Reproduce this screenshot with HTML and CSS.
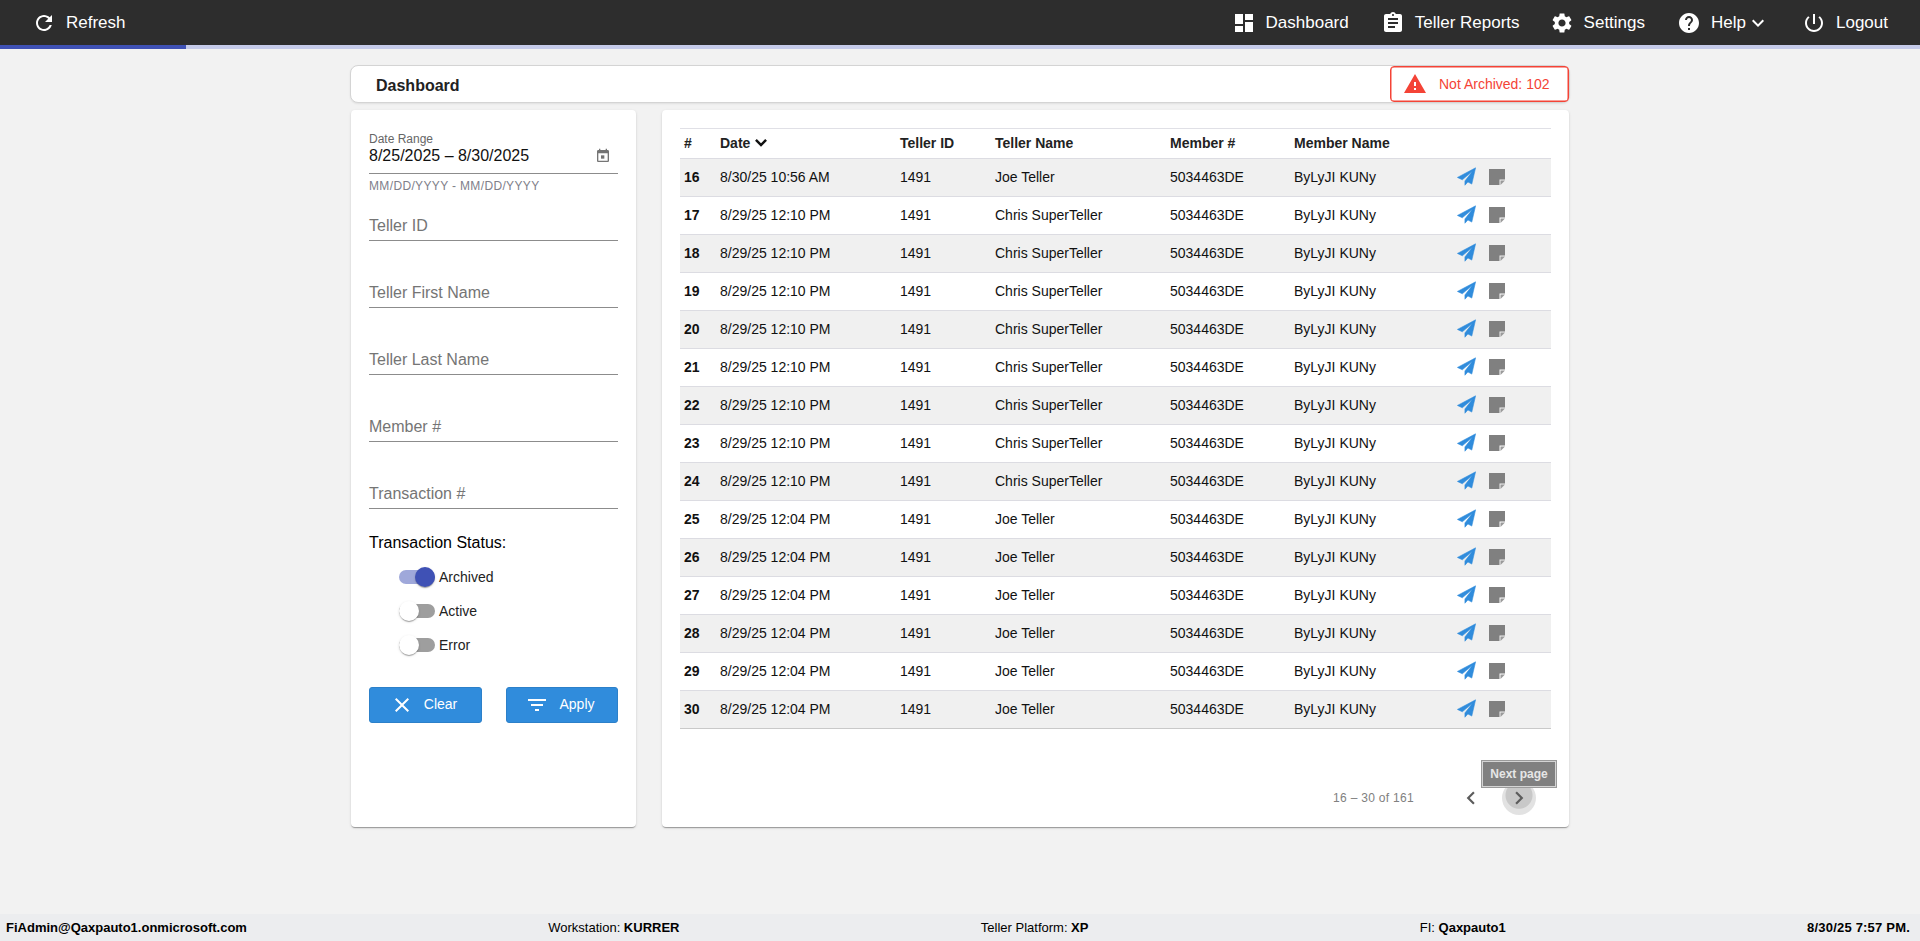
FILE: index.html
```html
<!DOCTYPE html>
<html lang="en">
<head>
<meta charset="utf-8">
<title>Dashboard</title>
<link rel="stylesheet" href="styles.css">
</head>
<body>
<svg class="sprite" aria-hidden="true">
  <symbol id="plane" viewBox="0 0 24 24"><path d="M23.5 1 .5 13.2l6.2 3L19.5 5.5 10 17.6V23l3.8-4.1 4.9 2.7z"/></symbol>
  <symbol id="note" viewBox="0 0 16 16"><path d="M0 0h16v10.5h-5.5V16H0z"/><path d="M11.5 11.5H16L11.5 16z" class="fold"/></symbol>
</svg>
<div class="page">
  <header class="topbar">
    <a class="nav-item"><svg class="icon" viewBox="0 0 24 24"><path d="M17.65 6.35C16.2 4.9 14.21 4 12 4c-4.42 0-7.99 3.58-7.99 8s3.57 8 7.99 8c3.73 0 6.84-2.55 7.73-6h-2.08c-.82 2.33-3.04 4-5.65 4-3.31 0-6-2.69-6-6s2.69-6 6-6c1.66 0 3.14.69 4.22 1.78L13 11h7V4l-2.35 2.35z"/></svg><span>Refresh</span></a>
    <nav class="nav-right">
      <a class="nav-item"><svg class="icon" viewBox="0 0 24 24"><path d="M3 13h8V3H3v10zm0 8h8v-6H3v6zm10 0h8V11h-8v10zm0-18v6h8V3h-8z"/></svg><span>Dashboard</span></a>
      <a class="nav-item nav-reports"><svg class="icon" viewBox="0 0 24 24"><path d="M19 3h-4.18C14.4 1.84 13.3 1 12 1c-1.3 0-2.4.84-2.82 2H5c-1.1 0-2 .9-2 2v14c0 1.1.9 2 2 2h14c1.1 0 2-.9 2-2V5c0-1.1-.9-2-2-2zm-7 0c.55 0 1 .45 1 1s-.45 1-1 1-1-.45-1-1 .45-1 1-1zm2 14H7v-2h7v2zm3-4H7v-2h10v2zm0-4H7V7h10v2z"/></svg><span>Teller Reports</span></a>
      <a class="nav-item"><svg class="icon" viewBox="0 0 24 24"><path d="M19.14 12.94c.04-.3.06-.61.06-.94 0-.32-.02-.64-.07-.94l2.03-1.58c.18-.14.23-.41.12-.61l-1.92-3.32c-.12-.22-.37-.29-.59-.22l-2.39.96c-.5-.38-1.03-.7-1.62-.94l-.36-2.54c-.04-.24-.24-.41-.48-.41h-3.84c-.24 0-.43.17-.47.41l-.36 2.54c-.59.24-1.13.57-1.62.94l-2.39-.96c-.22-.08-.47 0-.59.22L2.74 8.87c-.12.21-.08.47.12.61l2.03 1.58c-.05.3-.09.63-.09.94s.02.64.07.94l-2.03 1.58c-.18.14-.23.41-.12.61l1.92 3.32c.12.22.37.29.59.22l2.39-.96c.5.38 1.03.7 1.62.94l.36 2.54c.05.24.24.41.48.41h3.84c.24 0 .44-.17.47-.41l.36-2.54c.59-.24 1.13-.56 1.62-.94l2.39.96c.22.08.47 0 .59-.22l1.92-3.32c.12-.22.07-.47-.12-.61l-2.01-1.58zM12 15.6c-1.98 0-3.6-1.62-3.6-3.6s1.62-3.6 3.6-3.6 3.6 1.62 3.6 3.6-1.62 3.6-3.6 3.6z"/></svg><span>Settings</span></a>
      <a class="nav-item"><svg class="icon" viewBox="0 0 24 24"><path d="M12 2C6.48 2 2 6.48 2 12s4.48 10 10 10 10-4.48 10-10S17.52 2 12 2zm1 17h-2v-2h2v2zm2.07-7.75l-.9.92C13.45 12.9 13 13.5 13 15h-2v-.5c0-1.1.45-2.1 1.17-2.83l1.24-1.26c.37-.36.59-.86.59-1.41 0-1.1-.9-2-2-2s-2 .9-2 2H8c0-2.21 1.79-4 4-4s4 1.79 4 4c0 .88-.36 1.68-.93 2.25z"/></svg><span>Help</span><svg class="icon caret" viewBox="0 0 24 24"><path d="M16.59 8.59L12 13.17 7.41 8.59 6 10l6 6 6-6z"/></svg></a>
      <a class="nav-item"><svg class="icon" viewBox="0 0 24 24"><path d="M13 3h-2v10h2V3zm4.83 2.17l-1.42 1.42C17.99 7.86 19 9.81 19 12c0 3.87-3.13 7-7 7s-7-3.13-7-7c0-2.19 1.01-4.14 2.58-5.42L6.17 5.17C4.23 6.82 3 9.26 3 12c0 4.97 4.03 9 9 9s9-4.03 9-9c0-2.74-1.23-5.18-3.17-6.83z"/></svg><span>Logout</span></a>
    </nav>
  </header>
  <div class="progress"><div class="progress-fill"></div></div>

  <main class="main">
    <div class="title-card">
      <h1 class="title">Dashboard</h1>
      <div class="alert">
        <svg class="alert-icon" viewBox="0 0 24 24"><path d="M1 21h22L12 2 1 21zm12-3h-2v-2h2v2zm0-4h-2v-4h2v4z"/></svg>
        <span>Not Archived: 102</span>
      </div>
    </div>

    <div class="columns">
      <aside class="card filters">
        <div class="date-field">
          <label class="date-label">Date Range</label>
          <div class="date-value">
            <span>8/25/2025 – 8/30/2025</span>
            <svg class="cal" viewBox="0 0 24 24"><path d="M19 3h-1V1h-2v2H8V1H6v2H5c-1.1 0-2 .9-2 2v14c0 1.1.9 2 2 2h14c1.1 0 2-.9 2-2V5c0-1.1-.9-2-2-2zm0 16H5V8h14v11z"/><path d="M9 11h5v5H9z"/></svg>
          </div>
          <div class="date-hint">MM/DD/YYYY - MM/DD/YYYY</div>
        </div>
        <div class="field field-first">Teller ID</div>
        <div class="field">Teller First Name</div>
        <div class="field">Teller Last Name</div>
        <div class="field">Member #</div>
        <div class="field">Transaction #</div>

        <div class="status-title">Transaction Status:</div>
        <div class="toggles">
          <div class="toggle on"><span class="track"><span class="thumb"></span></span><span>Archived</span></div>
          <div class="toggle"><span class="track"><span class="thumb"></span></span><span>Active</span></div>
          <div class="toggle"><span class="track"><span class="thumb"></span></span><span>Error</span></div>
        </div>

        <div class="actions">
          <button class="btn"><svg class="btn-icon" viewBox="0 0 24 24"><path d="M19 6.41L17.59 5 12 10.59 6.41 5 5 6.41 10.59 12 5 17.59 6.41 19 12 13.41 17.59 19 19 17.59 13.41 12z"/></svg><span class="btn-label">Clear</span></button>
          <button class="btn"><svg class="btn-icon" viewBox="0 0 24 24"><path d="M10 18h4v-2h-4v2zM3 6v2h18V6H3zm3 7h12v-2H6v2z"/></svg><span class="btn-label">Apply</span></button>
        </div>
      </aside>

      <section class="card results">
        <table class="grid">
          <colgroup><col class="c1"><col class="c2"><col class="c3"><col class="c4"><col class="c5"><col class="c6"><col class="c7"></colgroup>
          <thead>
            <tr><th>#</th><th><span class="sort">Date<svg class="sort-icon" viewBox="0 0 24 24"><path d="M16.59 7.59L12 12.17 7.41 7.59 5.5 9.5 12 16l6.5-6.5z"/></svg></span></th><th>Teller ID</th><th>Teller Name</th><th>Member #</th><th>Member Name</th><th></th></tr>
          </thead>
          <tbody>
            <tr><td class="num">16</td><td>8/30/25 10:56 AM</td><td>1491</td><td>Joe Teller</td><td>5034463DE</td><td>ByLyJI KUNy</td><td class="row-actions"><svg class="plane"><use href="#plane"/></svg><svg class="note"><use href="#note"/></svg></td></tr>
            <tr><td class="num">17</td><td>8/29/25 12:10 PM</td><td>1491</td><td>Chris SuperTeller</td><td>5034463DE</td><td>ByLyJI KUNy</td><td class="row-actions"><svg class="plane"><use href="#plane"/></svg><svg class="note"><use href="#note"/></svg></td></tr>
            <tr><td class="num">18</td><td>8/29/25 12:10 PM</td><td>1491</td><td>Chris SuperTeller</td><td>5034463DE</td><td>ByLyJI KUNy</td><td class="row-actions"><svg class="plane"><use href="#plane"/></svg><svg class="note"><use href="#note"/></svg></td></tr>
            <tr><td class="num">19</td><td>8/29/25 12:10 PM</td><td>1491</td><td>Chris SuperTeller</td><td>5034463DE</td><td>ByLyJI KUNy</td><td class="row-actions"><svg class="plane"><use href="#plane"/></svg><svg class="note"><use href="#note"/></svg></td></tr>
            <tr><td class="num">20</td><td>8/29/25 12:10 PM</td><td>1491</td><td>Chris SuperTeller</td><td>5034463DE</td><td>ByLyJI KUNy</td><td class="row-actions"><svg class="plane"><use href="#plane"/></svg><svg class="note"><use href="#note"/></svg></td></tr>
            <tr><td class="num">21</td><td>8/29/25 12:10 PM</td><td>1491</td><td>Chris SuperTeller</td><td>5034463DE</td><td>ByLyJI KUNy</td><td class="row-actions"><svg class="plane"><use href="#plane"/></svg><svg class="note"><use href="#note"/></svg></td></tr>
            <tr><td class="num">22</td><td>8/29/25 12:10 PM</td><td>1491</td><td>Chris SuperTeller</td><td>5034463DE</td><td>ByLyJI KUNy</td><td class="row-actions"><svg class="plane"><use href="#plane"/></svg><svg class="note"><use href="#note"/></svg></td></tr>
            <tr><td class="num">23</td><td>8/29/25 12:10 PM</td><td>1491</td><td>Chris SuperTeller</td><td>5034463DE</td><td>ByLyJI KUNy</td><td class="row-actions"><svg class="plane"><use href="#plane"/></svg><svg class="note"><use href="#note"/></svg></td></tr>
            <tr><td class="num">24</td><td>8/29/25 12:10 PM</td><td>1491</td><td>Chris SuperTeller</td><td>5034463DE</td><td>ByLyJI KUNy</td><td class="row-actions"><svg class="plane"><use href="#plane"/></svg><svg class="note"><use href="#note"/></svg></td></tr>
            <tr><td class="num">25</td><td>8/29/25 12:04 PM</td><td>1491</td><td>Joe Teller</td><td>5034463DE</td><td>ByLyJI KUNy</td><td class="row-actions"><svg class="plane"><use href="#plane"/></svg><svg class="note"><use href="#note"/></svg></td></tr>
            <tr><td class="num">26</td><td>8/29/25 12:04 PM</td><td>1491</td><td>Joe Teller</td><td>5034463DE</td><td>ByLyJI KUNy</td><td class="row-actions"><svg class="plane"><use href="#plane"/></svg><svg class="note"><use href="#note"/></svg></td></tr>
            <tr><td class="num">27</td><td>8/29/25 12:04 PM</td><td>1491</td><td>Joe Teller</td><td>5034463DE</td><td>ByLyJI KUNy</td><td class="row-actions"><svg class="plane"><use href="#plane"/></svg><svg class="note"><use href="#note"/></svg></td></tr>
            <tr><td class="num">28</td><td>8/29/25 12:04 PM</td><td>1491</td><td>Joe Teller</td><td>5034463DE</td><td>ByLyJI KUNy</td><td class="row-actions"><svg class="plane"><use href="#plane"/></svg><svg class="note"><use href="#note"/></svg></td></tr>
            <tr><td class="num">29</td><td>8/29/25 12:04 PM</td><td>1491</td><td>Joe Teller</td><td>5034463DE</td><td>ByLyJI KUNy</td><td class="row-actions"><svg class="plane"><use href="#plane"/></svg><svg class="note"><use href="#note"/></svg></td></tr>
            <tr><td class="num">30</td><td>8/29/25 12:04 PM</td><td>1491</td><td>Joe Teller</td><td>5034463DE</td><td>ByLyJI KUNy</td><td class="row-actions"><svg class="plane"><use href="#plane"/></svg><svg class="note"><use href="#note"/></svg></td></tr>
          </tbody>
        </table>
        <div class="paginator">
          <span class="range">16 – 30 of 161</span>
          <button class="page-btn"><svg class="page-icon" viewBox="0 0 24 24"><path d="M15.41 7.41L14 6l-6 6 6 6 1.41-1.41L10.83 12z"/></svg></button>
          <button class="page-btn hover"><svg class="page-icon" viewBox="0 0 24 24"><path d="M10 6L8.59 7.41 13.17 12l-4.58 4.58L10 18l6-6z"/></svg><span class="tooltip">Next page</span></button>
        </div>
      </section>
    </div>
  </main>

  <footer class="footer">
    <b>FiAdmin@Qaxpauto1.onmicrosoft.com</b>
    <span>Workstation: <b>KURRER</b></span>
    <span>Teller Platform: <b>XP</b></span>
    <span class="foot-fi">FI: <b>Qaxpauto1</b></span>
    <b class="foot-time">8/30/25 7:57 PM.</b>
  </footer>
</div>
</body>
</html>
```
FILE: styles.css
```css
* { box-sizing: border-box; }
html, body { margin: 0; height: 100%; overflow: hidden; }
body { font-family: "Liberation Sans", Arial, sans-serif; background: #f2f2f2; color: #000; }
.sprite { display: none; }
.page { height: 941px; display: flex; flex-direction: column; }

.topbar { height: 45px; flex: none; background: #2d2d2d; color: #fff; display: flex; align-items: center; justify-content: space-between; padding: 0 32px; }
.nav-right { display: flex; gap: 32px; align-items: center; }
.nav-item { display: flex; align-items: center; gap: 10px; font-size: 17px; color: #fff; }
.nav-reports { margin-right: -2px; }
.icon { width: 24px; height: 24px; fill: #fff; flex: none; }
.caret { margin-left: -10px; }
.progress { height: 4px; flex: none; background: #c5cae9; }
.progress-fill { width: 186px; height: 100%; background: #3f51b5; }

.main { flex: 1; width: 1220px; margin: 0 auto; padding-top: 16px; min-height: 0; }
.title-card { height: 38px; background: #fff; border: 1px solid #d4d4d4; border-radius: 8px; box-shadow: 0 1px 2px rgba(0,0,0,.08); display: flex; align-items: center; justify-content: space-between; }
.title { margin: 3px 0 0 25px; font-size: 16px; font-weight: 700; color: #222; }
.alert { width: 179px; height: 36px; background: #fff; border: 1px solid #f44336; box-shadow: inset 0 0 0 .5px #f44336; border-radius: 4px; color: #f44336; font-size: 14px; display: flex; align-items: center; padding-left: 12px; gap: 12px; }
.alert-icon { width: 24px; height: 24px; fill: #f44336; flex: none; }

.columns { display: flex; gap: 26px; margin-top: 7px; height: 717px; }
.card { background: #fff; border-radius: 4px; box-shadow: 0 2px 1px -1px rgba(0,0,0,.2), 0 1px 1px 0 rgba(0,0,0,.14), 0 1px 3px 0 rgba(0,0,0,.12); }
.filters { width: 285px; margin-left: 1px; flex: none; padding: 23px 18px 0; }
.results { flex: 1; margin-right: 1px; padding: 18px 18px 0; min-width: 0; }

.date-label { display: block; font-size: 12px; line-height: 12px; color: #666; }
.date-value { height: 29px; padding-top: 1px; border-bottom: 1px solid #8c8c8c; display: flex; justify-content: space-between; font-size: 16px; line-height: 20px; color: #111; }
.cal { width: 16px; height: 16px; fill: #757575; margin: 2px 7px 0 0; }
.date-hint { font-size: 12px; letter-spacing: .35px; line-height: 14px; margin-top: 5px; color: #80808a; }
.field { height: 26px; margin-top: 41px; padding: 1px 0 4px; border-bottom: 1px solid #8c8c8c; font-size: 16px; line-height: 20px; color: #757575; }
.field-first { margin-top: 22px; }
.status-title { margin-top: 24px; font-size: 16px; line-height: 20px; color: #000; }
.toggles { margin-top: 9px; padding-left: 30px; display: flex; flex-direction: column; gap: 4px; }
.toggle { height: 30px; display: flex; align-items: center; gap: 4px; font-size: 14px; color: #222; }
.track { display: block; width: 36px; height: 14px; border-radius: 7px; background: #9e9e9e; position: relative; }
.thumb { position: absolute; left: 0; top: -3px; width: 20px; height: 20px; border-radius: 50%; background: #fff; box-shadow: 0 2px 1px -1px rgba(0,0,0,.2), 0 1px 1px 0 rgba(0,0,0,.14), 0 1px 3px 0 rgba(0,0,0,.12); }
.on .track { background: #9fa8da; }
.on .thumb { left: 16px; background: #3f51b5; }
.actions { margin-top: 27px; display: flex; justify-content: space-between; }
.btn { width: 113px; height: 36px; padding: 0 4px 0 0; background: #308cdc; border: 1px solid #2c80c9; border-radius: 3px; color: #fff; font: 14px "Liberation Sans", Arial, sans-serif; display: flex; align-items: center; justify-content: center; gap: 10px; }
.actions .btn:last-child { width: 112px; }
.btn-icon { width: 24px; height: 24px; fill: #fff; flex: none; }
.btn-label { margin-bottom: 2px; }

.grid { width: 871px; border-collapse: collapse; table-layout: fixed; font-size: 14px; color: #111; }
.c1 { width: 36px; } .c2 { width: 180px; } .c3 { width: 95px; } .c4 { width: 175px; } .c5 { width: 124px; } .c6 { width: 163px; } .c7 { width: 98px; }
.grid thead tr { height: 30px; border-top: 1px solid #e0e0e6; }
.grid th { text-align: left; font-weight: 700; padding: 0 0 2px 4px; color: #222; }
.grid tbody tr { height: 38px; border-top: 1px solid #dcdce2; }
.grid tbody tr:nth-child(odd) { background: #f0f0f0; }
.grid tbody tr:last-child { border-bottom: 1px solid #c9c9c9; }
.grid td { padding: 0 0 2px 4px; }
.grid .num { font-weight: 700; }
.sort { display: inline-flex; align-items: center; gap: 0; }
.sort-icon { width: 22px; height: 22px; fill: #111; margin-top: 1px; }
.row-actions svg { vertical-align: middle; }
.plane { width: 19px; height: 19px; fill: #308cdc; stroke: #308cdc; stroke-width: .7; }
.note { width: 16px; height: 16px; fill: #808080; margin-left: 13px; }
.fold { fill: #9a9a9a; }

.paginator { margin-top: 49px; height: 40px; display: flex; align-items: center; justify-content: flex-end; padding-right: 12px; gap: 8px; }
.range { font-size: 12px; letter-spacing: .3px; color: #808080; margin-right: 29px; }
.page-btn { width: 40px; height: 40px; padding: 0; border: 0; background: transparent; display: flex; align-items: center; justify-content: center; position: relative; }
.page-btn.hover::before { content: ""; position: absolute; left: 3px; top: 3px; width: 34px; height: 34px; border-radius: 50%; background: radial-gradient(circle at 50% 42%, #c8c8c8 0 13px, #e2e2e2 14px); }
.page-icon { width: 26px; height: 26px; fill: #5c5c5c; position: relative; }
.tooltip { position: absolute; left: -18px; top: -18px; width: 76px; height: 28px; background: #808080; border: 1px solid #9a9a9a; box-shadow: inset 0 0 0 1px #d4d4d4; color: #e6e6e6; font: 700 12px/26px "Liberation Sans", Arial, sans-serif; text-align: center; }

.footer { height: 27px; flex: none; background: #ecedef; display: flex; align-items: center; justify-content: space-between; padding: 0 10px 0 6px; font-size: 13px; color: #000; }
.foot-fi { margin-left: 30px; }
.foot-time { letter-spacing: .2px; }
```
